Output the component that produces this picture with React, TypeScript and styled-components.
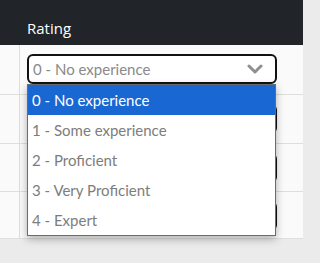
import React from "react"
import styled, { createGlobalStyle } from "styled-components"

const GlobalStyle = createGlobalStyle`
  html, body {
    margin: 0;
    padding: 0;
    background: #ebebeb;
  }
  * {
    box-sizing: border-box;
  }
`

const options = [
  "0 - No experience",
  "1 - Some experience",
  "2 - Proficient",
  "3 - Very Proficient",
  "4 - Expert",
]

const rowHeights = [50, 49, 48, 47]

const Page = styled.div`
  position: relative;
  width: 303px;
  height: 263px;
  overflow: hidden;
  background: #ebebeb;
`

const HeadRow = styled.div`
  display: grid;
  grid-template-columns: 20px 1fr;
  height: 45px;
  background: #212529;
  color: #fff;
  font-family: "Open Sans", "Noto Sans", sans-serif;
  font-size: 15px;
`

const HeadCell = styled.div`
  display: flex;
  align-items: flex-end;
  padding: 0 0 7px 7px;
`

const Row = styled.div<{ $h: number }>`
  display: grid;
  grid-template-columns: 20px 1fr;
  height: ${p => p.$h}px;
  background: #fafafa;
  border-bottom: 1px solid #dedede;
`

const IndexCell = styled.div`
  border-right: 1px solid #dedede;
`

const SelectCell = styled.div`
  padding: 9px 26px 0 7px;
`

const SelectBox = styled.div`
  display: flex;
  align-items: center;
  justify-content: space-between;
  height: 30px;
  padding: 0 12px 0 4px;
  background: #fff;
  border: 2px solid #111;
  border-radius: 6px;
  color: #8a8a8a;
  font-family: "Lato", "Noto Sans", sans-serif;
  font-size: 15px;
`

const Chevron = () => (
  <svg width="16" height="10" viewBox="0 0 16 10">
    <path
      d="M2 2 L8 8 L14 2"
      fill="none"
      stroke="#8f8f8f"
      strokeWidth="3"
      strokeLinecap="round"
      strokeLinejoin="round"
    />
  </svg>
)

const Menu = styled.ul`
  position: absolute;
  top: 84px;
  left: 27px;
  width: 249px;
  margin: 0;
  padding: 0;
  list-style: none;
  background: #fff;
  border: 1px solid #6b6b6b;
  box-shadow: 0 3px 8px rgba(0, 0, 0, 0.3);
  font-family: "Lato", "Noto Sans", sans-serif;
  font-size: 15px;
`

const Item = styled.li<{ $active?: boolean }>`
  display: flex;
  align-items: center;
  height: 30px;
  padding-left: 4px;
  background: ${p => (p.$active ? "#1967d2" : "#fff")};
  color: ${p => (p.$active ? "#fff" : "#7d7d7d")};
`

export default function App() {
  return (
    <>
      <GlobalStyle />
      <Page>
        <HeadRow>
          <div />
          <HeadCell>Rating</HeadCell>
        </HeadRow>
        {rowHeights.map((h, i) => (
          <Row key={i} $h={h}>
            <IndexCell />
            <SelectCell>
              <SelectBox>
                <span>{i === 0 ? options[0] : ""}</span>
                <Chevron />
              </SelectBox>
            </SelectCell>
          </Row>
        ))}
        <Menu>
          {options.map((o, i) => (
            <Item key={o} $active={i === 0}>
              {o}
            </Item>
          ))}
        </Menu>
      </Page>
    </>
  )
}
